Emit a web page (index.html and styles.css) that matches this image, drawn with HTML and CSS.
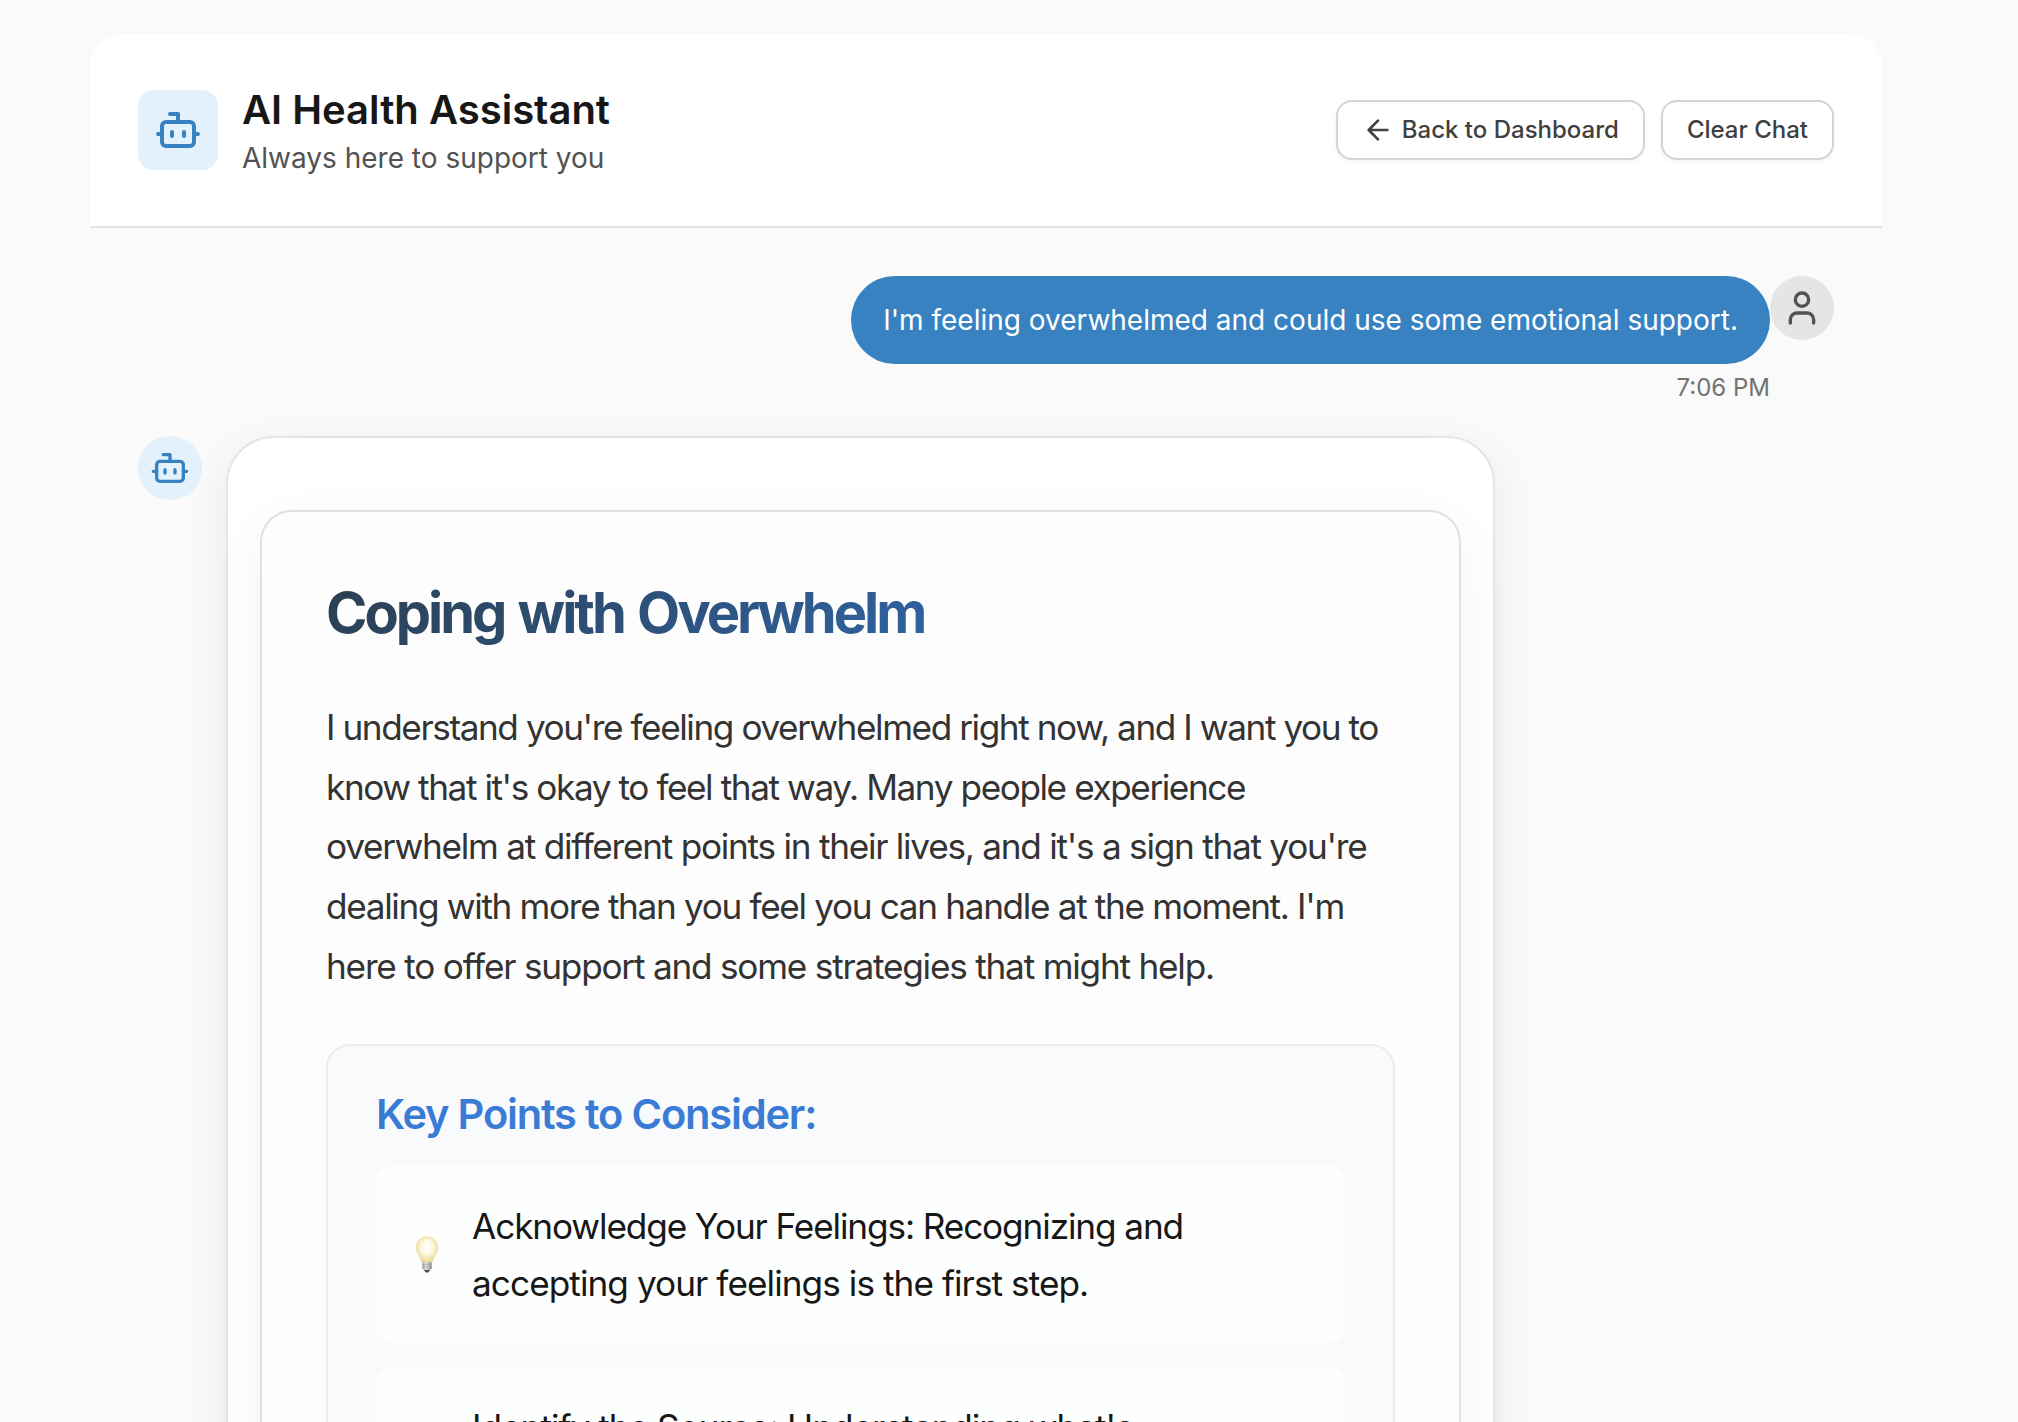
FILE: index.html
```html
<!DOCTYPE html>
<html lang="en">
<head>
<meta charset="utf-8">
<title>AI Health Assistant</title>
<link rel="stylesheet" href="styles.css">
</head>
<body>
<svg class="defs" aria-hidden="true">
  <defs>
    <symbol id="bot" viewBox="0 0 24 24">
      <path d="M12 8V4H8"/>
      <rect width="16" height="12" x="4" y="8" rx="2"/>
      <path d="M2 14h2M20 14h2M15 13v2M9 13v2"/>
    </symbol>
    <radialGradient id="glass" cx="50%" cy="42%" r="60%">
      <stop offset="0" stop-color="#ffffff"/>
      <stop offset=".4" stop-color="#fefae6"/>
      <stop offset="1" stop-color="#edd78a"/>
    </radialGradient>
    <linearGradient id="metal">
      <stop offset="0" stop-color="#9a9a9a"/>
      <stop offset=".4" stop-color="#e2e2e2"/>
      <stop offset="1" stop-color="#8a8a8a"/>
    </linearGradient>
    <symbol id="bulb" viewBox="0 0 24 38">
      <path d="M12 .8C5.600.8.9 5.400.9 11.500c0 6.300 4.300 8.500 5.600 15.300h11c1.300-6.800 5.600-9 5.600-15.300C23.100 5.400 18.400.8 12 .8z" fill="url(#glass)" stroke="#e9d796" stroke-width=".6"/>
      <path d="M7.200 27h9.600v6.200l-1.800 2H9l-1.800-2z" fill="url(#metal)"/>
      <path d="M7.200 29.500l9.600-.8M7.200 32l9.600-.8" stroke="#a0a0a0" stroke-width=".6"/>
      <path d="M9 35h6l-1.600 2.400h-2.800z" fill="#4d4d4d"/>
    </symbol>
  </defs>
</svg>
<main class="chat">
  <header class="header">
    <div class="brand">
      <div class="brand-icon"><svg class="icon icon-lg"><use href="#bot"/></svg></div>
      <div>
        <h1 class="brand-title">AI Health Assistant</h1>
        <p class="brand-sub">Always here to support you</p>
      </div>
    </div>
    <div class="actions">
      <button class="btn"><svg class="icon icon-sm" viewBox="0 0 24 24"><path d="m12 19-7-7 7-7M19 12H5"/></svg><span>Back to Dashboard</span></button>
      <button class="btn"><span>Clear Chat</span></button>
    </div>
  </header>
  <section class="messages">
    <div class="row row-user">
      <div class="user-col">
        <div class="bubble">I'm feeling overwhelmed and could use some emotional support.</div>
        <time class="time">7:06 PM</time>
      </div>
      <div class="avatar avatar-user"><svg class="icon" viewBox="0 0 24 24"><path d="M19 21v-2a4 4 0 0 0-4-4H9a4 4 0 0 0-4 4v2"/><circle cx="12" cy="7" r="4"/></svg></div>
    </div>
    <div class="row row-bot">
      <div class="avatar avatar-bot"><svg class="icon"><use href="#bot"/></svg></div>
      <div class="reply">
        <article class="card">
          <h2 class="card-title">Coping with Overwhelm</h2>
          <p class="intro"><span class="line tight">I understand you're feeling overwhelmed right now, and I want you to </span><span class="line tight">know that it's okay to feel that way. Many people experience </span><span class="line snug">overwhelm at different points in their lives, and it's a sign that you're </span><span class="line close">dealing with more than you feel you can handle at the moment. I'm </span><span class="line loose">here to offer support and some strategies that might help.</span></p>
          <section class="points">
            <h3 class="points-title">Key Points to Consider:</h3>
            <ul class="list">
              <li class="item"><svg class="bulb"><use href="#bulb"/></svg><span><span class="line">Acknowledge Your Feelings: Recognizing and </span><span class="line relaxed">accepting your feelings is the first step.</span></span></li>
              <li class="item"><svg class="bulb"><use href="#bulb"/></svg><span><span class="line medium">Identify the Source: Understanding what's </span><span class="line">causing your stress can help you cope.</span></span></li>
            </ul>
          </section>
        </article>
      </div>
    </div>
  </section>
</main>
</body>
</html>
```
FILE: styles.css
```css
* { box-sizing: border-box; margin: 0; padding: 0; }

html, body { height: 100%; }

body {
  overflow: hidden;
  background: #fafafa;
  color: #171717;
  font-family: Inter, "Liberation Sans", sans-serif;
  -webkit-font-smoothing: antialiased;
}

.defs { position: absolute; width: 0; height: 0; }

.chat { width: 1792px; height: 100%; margin-left: 90px; padding-top: 34px; }

.header {
  display: flex;
  align-items: center;
  justify-content: space-between;
  height: 194px;
  padding: 0 48px;
  background: #fff;
  border-bottom: 2px solid #e5e5e5;
  border-radius: 32px 32px 0 0;
}

.brand { display: flex; align-items: center; gap: 24px; }

.brand-icon {
  display: grid;
  place-items: center;
  width: 80px;
  height: 80px;
  border-radius: 16px;
  background: #e3f1fc;
  color: #3882c2;
}

.brand-title { font-size: 40px; line-height: 56px; font-weight: 600; }
.brand-sub { font-size: 28px; line-height: 40px; color: #525252; }

.icon {
  display: block;
  flex: none;
  width: 40px;
  height: 40px;
  fill: none;
  stroke: currentColor;
  stroke-width: 2;
  stroke-linecap: round;
  stroke-linejoin: round;
}
.icon-lg { width: 48px; height: 48px; }
.icon-sm { width: 32px; height: 32px; }

.actions { display: flex; gap: 16px; }

.btn {
  display: flex;
  align-items: center;
  gap: 8px;
  height: 60px;
  padding: 0 24px;
  border: 2px solid #d4d4d4;
  border-radius: 16px;
  background: #fff;
  color: #404040;
  font: 500 24px/32px Inter, "Liberation Sans", sans-serif;
  white-space: nowrap;
  box-shadow: 0 2px 4px rgba(0, 0, 0, .05);
}

.messages { padding: 48px 48px 0; }
.row { display: flex; align-items: flex-start; }
.row-user { justify-content: flex-end; }
.row-bot { gap: 24px; margin-top: 32px; }

.user-col { display: flex; flex-direction: column; align-items: flex-end; }

.bubble {
  height: 88px;
  padding: 0 32px;
  border-radius: 44px;
  background: #3882c2;
  color: #fff;
  font-size: 28px;
  line-height: 88px;
  white-space: nowrap;
}

.time { margin-top: 8px; font-size: 24px; line-height: 32px; color: #737373; }

.avatar {
  display: grid;
  place-items: center;
  flex: none;
  width: 64px;
  height: 64px;
  border-radius: 50%;
}
.avatar-user { background: #e5e5e5; color: #525252; }
.avatar-bot { background: #e3f1fc; color: #3882c2; }

.reply {
  width: 1268.8px;
  padding: 72px 32px 32px;
  border: 2px solid #e5e5e5;
  border-radius: 48px;
  background: #fff;
  box-shadow: 0 16px 48px rgba(0, 0, 0, .08);
}

.card {
  padding: 64px;
  border: 2px solid #e0e0e0;
  border-radius: 32px;
  background: #fdfdfd;
  box-shadow: 0 16px 56px rgba(0, 0, 0, .05);
}

.card-title {
  font-size: 56px;
  line-height: 74px;
  font-weight: 750;
  letter-spacing: -.054em;
  word-spacing: 3px;
  background: linear-gradient(135deg, #2c3e50, #317cda);
  -webkit-background-clip: text;
  background-clip: text;
  color: transparent;
}

.intro {
  margin-top: 47.8px;
  font-size: 35.2px;
  line-height: 59.84px;
  color: #333;
  white-space: nowrap;
}

.line { display: block; }
.tight { letter-spacing: -1.43px; }
.close { letter-spacing: -1.34px; }
.snug { letter-spacing: -1.26px; }
.loose { letter-spacing: -1.22px; }
.relaxed { letter-spacing: -.94px; }
.medium { letter-spacing: -.98px; }

.points {
  margin-top: 47.3px;
  padding: 40px 48px 48px;
  border: 2px solid #ececec;
  border-radius: 24px;
  background: #f9fafc;
}

.points-title {
  font-size: 41.6px;
  line-height: 56px;
  font-weight: 600;
  letter-spacing: -1.2px;
  color: #3a7bd5;
}

.list { display: grid; gap: 24px; margin-top: 24px; list-style: none; }

.item {
  display: flex;
  align-items: center;
  padding: 32px;
  border-radius: 16px;
  background: #fdfefe;
  font-size: 35.2px;
  line-height: 56.32px;
  letter-spacing: -1.12px;
  white-space: nowrap;
}

.bulb { flex: none; width: 24px; height: 37px; margin: 0 33px 0 7px; }
```
